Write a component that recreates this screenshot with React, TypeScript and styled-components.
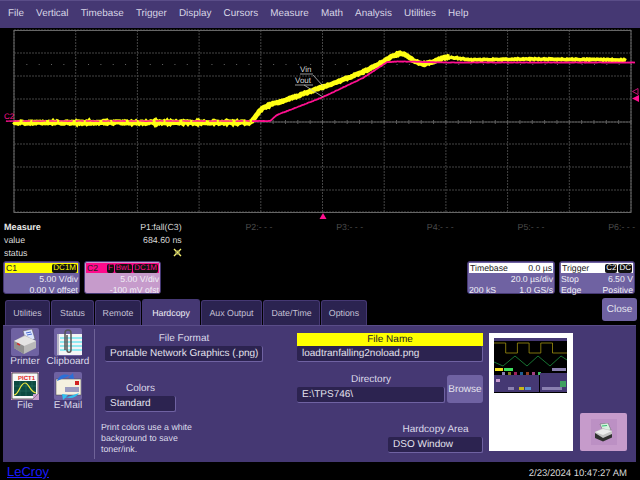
import React from 'react';
import styled, { createGlobalStyle } from 'styled-components';

const GlobalStyle = createGlobalStyle`
  html, body {
    margin: 0;
    background: #000;
  }
  * {
    box-sizing: border-box;
  }
`;

const MENU = ['File', 'Vertical', 'Timebase', 'Trigger', 'Display', 'Cursors', 'Measure', 'Math', 'Analysis', 'Utilities', 'Help'];
const TABS = ['Utilities', 'Status', 'Remote', 'Hardcopy', 'Aux Output', 'Date/Time', 'Options'];
const TAB_WIDTHS = [45, 43, 46, 58, 61, 57, 46];

const VLINES = [14, 75.7, 137.4, 199.1, 260.8, 322.5, 384.2, 445.9, 507.6, 569.3, 631];
const HLINES = [30, 53, 76, 99, 122, 144, 167, 190, 212];

const YELLOW_FLAT: number[][] = [[14, 122.5], [250, 122.5]];
const YELLOW_RISE: number[][] = [
  [250, 122.5], [253, 120], [258, 113], [263, 108], [272, 104], [280, 102], [300, 95], [323, 87],
  [345, 79], [363, 72], [383, 62], [392, 56], [400, 53.5], [406, 55], [413, 60], [420, 63.5], [425, 64], [435, 61],
  [443, 58], [450, 57],
];
const YELLOW_TAIL: number[][] = [[450, 57], [460, 58.5], [470, 60], [520, 59], [580, 59.5], [626, 60]];
const PINK_FLAT: number[][] = [[6, 121], [252, 121]];
const PINK_RISE: number[][] = [
  [252, 121], [270, 121], [277, 115], [300, 106], [323, 97], [363, 78], [387, 62], [400, 61.5], [450, 62.5], [635, 62.5],
];

// small seeded generator so the noise stays the same on every render
const makeNoise = (seed: number) => {
  let s = seed;
  return () => {
    s = (s * 16807) % 2147483647;
    return s / 2147483647 - 0.5;
  };
};

const tracePath = (pts: number[][], amp: number, seed: number) => {
  const noise = makeNoise(seed);
  const out: string[] = [];
  const end = pts[pts.length - 1][0];
  let seg = 0;
  for (let x = pts[0][0]; x <= end; x += 1) {
    while (seg < pts.length - 2 && x > pts[seg + 1][0]) seg++;
    const [x0, y0] = pts[seg];
    const [x1, y1] = pts[seg + 1];
    const y = y0 + ((y1 - y0) * (x - x0)) / (x1 - x0);
    out.push(`${x},${(y + noise() * amp).toFixed(2)}`);
  }
  return out.join(' ');
};

const Scope = () => (
  <ScopeSvg viewBox="0 28 640 192" width={640} height={192}>
    {VLINES.map((x) => (
      <line key={x} x1={x} x2={x} y1={30} y2={212} stroke="#444" strokeWidth={1} strokeDasharray="2 1" />
    ))}
    {HLINES.map((y) => (
      <line key={y} x1={14} x2={631} y1={y} y2={y} stroke="#444" strokeWidth={1} strokeDasharray="2 1" />
    ))}
    <rect x={14} y={30.5} width={617} height={182} fill="none" stroke="#666" />
    <line x1={14} x2={631} y1={122} y2={122} stroke="#5c5c5c" />
    {Array.from({ length: 51 }).map((_, i) => (
      <line key={i} x1={14 + i * 12.34} x2={14 + i * 12.34} y1={120} y2={124} stroke="#5c5c5c" />
    ))}
    {Array.from({ length: 51 }).map((_, i) => (
      <rect key={i} x={14 + i * 12.34} y={64} width={1} height={1} fill="#666" />
    ))}
    <polyline points={tracePath(YELLOW_FLAT, 1.8, 4711)} fill="none" stroke="#ffff14" strokeWidth={5} />
    <polyline points={tracePath(PINK_FLAT, 0.4, 91)} fill="none" stroke="#ff1090" strokeWidth={1.4} strokeDasharray="14 3 8 2" />
    <polyline points={tracePath(YELLOW_RISE, 1.2, 733)} fill="none" stroke="#ffff14" strokeWidth={5} />
    <polyline points={tracePath(YELLOW_TAIL, 1.2, 2027)} fill="none" stroke="#ffff14" strokeWidth={3.6} />
    <polyline points={tracePath(PINK_RISE, 0.4, 311)} fill="none" stroke="#ff1090" strokeWidth={1.8} />
    <ScopeLabel x={4} y={119} fill="#ff1090">C2</ScopeLabel>
    <ScopeLabel x={300} y={72} fill="#d8d8d8" fontSize={10}>Vin</ScopeLabel>
    <ScopeLabel x={295} y={83} fill="#d8d8d8" fontSize={10}>Vout</ScopeLabel>
    <path d="M300 74H313M295 85H313M313 75L323 86M304 85L323 97" fill="none" stroke="#bdbdbd" strokeWidth={0.8} />
    <path d="M638 88.5V94.5L632.5 91.5Z" fill="none" stroke="#c01070" />
    <path d="M639 95V102L632 98.5Z" fill="#ff1090" />
    <path d="M323 213L326.5 219H319.5Z" fill="#ff1090" />
  </ScopeSvg>
);

const StatusMark = () => (
  <svg width={9} height={9} viewBox="0 0 9 9">
    <path d="M1 1L8 8M8 1L1 8" stroke="#f4f070" strokeWidth={1.4} />
    <circle cx={4.5} cy={4.5} r={2} fill="none" stroke="#8a8a50" />
  </svg>
);

const PrinterIcon = () => (
  <svg width={28} height={28} viewBox="0 0 28 28">
    <path d="M12 3L21 1L24 11L15 13Z" fill="#dfe6ff" stroke="#555" strokeWidth={0.5} />
    <path d="M15 5L20 4M16 7L21 6" stroke="#4a6fd0" strokeWidth={1} />
    <path d="M3 13L14 7L25 13V20L13 26L3 20Z" fill="#b9b9b9" />
    <path d="M3 13L13 18L25 13L14 8Z" fill="#e4e4e4" />
    <path d="M13 18V26L3 20V13Z" fill="#8f8f8f" />
    <path d="M6 15.5L9 17" stroke="#d03030" strokeWidth={1.5} />
  </svg>
);

const ClipboardIcon = () => (
  <svg width={28} height={28} viewBox="0 0 28 28">
    <rect x={3} y={6} width={25} height={21} fill="#f4f4f4" />
    <path d="M6 10H28M6 14H28M6 18H28M6 22H28" stroke="#30e0f0" strokeWidth={1} />
    <rect x={3} y={6} width={2} height={21} fill="#b8b8c8" />
    <path d="M11 22V5C11 1 17 1 17 5V22C17 25 13 25 13 22V7" fill="none" stroke="#555" strokeWidth={1.5} />
  </svg>
);

const FileIcon = () => (
  <svg width={28} height={28} viewBox="0 0 28 28">
    <rect width={28} height={28} fill="#c69bcb" />
    <path d="M1 1H27V22L22 27H1Z" fill="#f8f8f8" stroke="#222" strokeWidth={0.7} />
    <IconText x={7} y={7.5} fill="#e02020">PICT1</IconText>
    <rect x={3} y={9} width={22} height={15} fill="#0c4a40" />
    <path d="M9 9V24M15 9V24M21 9V24M3 14H25M3 19H25" stroke="#2c7a6a" strokeWidth={0.5} />
    <path d="M3 23C8 23 9 11 14 11C18 11 19 20 25 21" fill="none" stroke="#f0e840" strokeWidth={1.2} />
    <path d="M22 27V22H27Z" fill="#c9a0d0" />
  </svg>
);

const MailIcon = () => (
  <svg width={28} height={28} viewBox="0 0 28 28">
    <rect x={2} y={7} width={25} height={16} fill="#f4f0e0" stroke="#444" strokeWidth={0.5} />
    <rect x={21} y={9} width={4} height={4} fill="#d02020" />
    <rect x={11} y={15} width={14} height={5} fill="#9a9ac0" />
    <path d="M3 9C5 3 11 1 16 4L14 6L20 7L19 1L17 3" fill="#2a70d8" />
    <path d="M25 21C22 26 16 27 12 25L14 23L8 22L9 28L11 26" fill="#30c0f0" />
  </svg>
);

const PrintGlyph = () => (
  <svg width={19} height={19} viewBox="0 0 19 19">
    <path d="M6 1L14 0L17 7L9 8Z" fill="#d8f0e0" stroke="#444" strokeWidth={0.4} />
    <path d="M8 3L13 2.5" stroke="#30c070" strokeWidth={1.2} />
    <path d="M1 9L9 5L18 8V14L9 18L1 14Z" fill="#c4c4c4" />
    <path d="M1 9L9 12L18 8L9 6Z" fill="#ececec" />
    <path d="M1 10V15L9 18.5L18 14.5V11L9 15Z" fill="#303030" />
  </svg>
);

const Thumbnail = () => (
  <svg width={73} height={55} viewBox="0 0 73 55">
    <rect width={73} height={55} fill="#000" />
    <rect width={73} height={3} fill="#453873" />
    <path d="M0 5H11.7V15H23.4V5H35.1V15H46.8V5H58.5V15H73" fill="none" stroke="#a09010" strokeWidth={0.8} />
    <path d="M0 24L9 28L21 18L33 28L44 18L56 28L67 18L73 22" fill="none" stroke="#1a8038" strokeWidth={0.9} />
    <rect x={1} y={30} width={8} height={3} fill="#f0e020" />
    <rect x={10} y={30} width={9} height={3} fill="#40e060" />
    <rect x={58} y={30} width={14} height={3} fill="#8a80b0" />
    {['#8a80b0', '#807820', '#a02060', '#206090', '#904020', '#a04080', '#40c060'].map((c, i) => (
      <rect key={c} x={8 + i * 6} y={34} width={3} height={3} fill={c} />
    ))}
    <rect x={0} y={37} width={45} height={17} fill="#453873" />
    <rect x={46} y={35} width={27} height={19} fill="#453873" />
    <rect x={66} y={43} width={6} height={6} fill="#40a060" />
    <rect x={2} y={41} width={4} height={3} fill="#c89ad0" />
    <rect x={14} y={49} width={6} height={3} fill="#8a80b0" />
    <rect x={25} y={49} width={5} height={3} fill="#c8b818" />
    <rect x={31} y={49} width={6} height={3} fill="#5a90d0" />
    <rect x={48} y={49} width={20} height={3} fill="#8a80b0" />
  </svg>
);

const App = () => {
  return (
    <Page>
      <GlobalStyle />
      <MenuBar>
        {MENU.map((m) => (
          <MenuItem key={m}>{m}</MenuItem>
        ))}
      </MenuBar>
      <Scope />
      <MeasureTable>
        <MeasureHead>Measure</MeasureHead>
        <MeasureCell>P1:fall(C3)</MeasureCell>
        {['P2', 'P3', 'P4', 'P5', 'P6'].map((p) => (
          <MeasureCell key={p} $dim>{p}:- - -</MeasureCell>
        ))}
        <MeasureLabel>value</MeasureLabel>
        <MeasureCell>684.60 ns</MeasureCell>
        <MeasureRest />
        <MeasureLabel>status</MeasureLabel>
        <MeasureCell><StatusMark /></MeasureCell>
        <MeasureRest />
      </MeasureTable>
      <DescriptorRow>
        <Descriptor $w={77} $bg="#6f62a2">
          <DescriptorTitle $bg="#ffff00">
            C1
            <Chips><Chip $fg="#ffff00">DC1M</Chip></Chips>
          </DescriptorTitle>
          <DescriptorLine><span />5.00 V/div</DescriptorLine>
          <DescriptorLine><span />0.00 V offset</DescriptorLine>
        </Descriptor>
        <Descriptor $w={77} $bg="#c69bcb">
          <DescriptorTitle $bg="#ff0a8c">
            C2
            <Chips>
              <Chip $fg="#ff0a8c">F</Chip>
              <Chip $fg="#ff0a8c">BwL</Chip>
              <Chip $fg="#ff0a8c">DC1M</Chip>
            </Chips>
          </DescriptorTitle>
          <DescriptorLine><span />5.00 V/div</DescriptorLine>
          <DescriptorLine><span />-100 mV ofst</DescriptorLine>
        </Descriptor>
        <DescriptorSpacer />
        <Descriptor $w={88} $bg="#6f62a2">
          <DescriptorTitle $bg="#ffffff">
            Timebase
            <span>0.0 µs</span>
          </DescriptorTitle>
          <DescriptorLine><span />20.0 µs/div</DescriptorLine>
          <DescriptorLine><span>200 kS</span>1.0 GS/s</DescriptorLine>
        </Descriptor>
        <Descriptor $w={76} $bg="#6f62a2">
          <DescriptorTitle $bg="#ffffff">
            Trigger
            <Chips>
              <Chip $fg="#ffffff">C2</Chip>
              <Chip $fg="#ffffff">DC</Chip>
            </Chips>
          </DescriptorTitle>
          <DescriptorLine><span>Stop</span>6.50 V</DescriptorLine>
          <DescriptorLine><span>Edge</span>Positive</DescriptorLine>
        </Descriptor>
      </DescriptorRow>
      <TabRow>
        {TABS.map((t, i) => (
          <Tab key={t} $w={TAB_WIDTHS[i]} $active={t === 'Hardcopy'}>{t}</Tab>
        ))}
        <CloseButton>Close</CloseButton>
      </TabRow>
      <Panel>
        <IconGrid>
          <IconCell>
            <IconTile><PrinterIcon /></IconTile>
            Printer
          </IconCell>
          <IconCell>
            <IconTile><ClipboardIcon /></IconTile>
            Clipboard
          </IconCell>
          <IconCell>
            <IconTile><FileIcon /></IconTile>
            File
          </IconCell>
          <IconCell>
            <IconTile><MailIcon /></IconTile>
            E-Mail
          </IconCell>
        </IconGrid>
        <Divider />
        <FormatColumn>
          <FieldLabel $w={158} $top={4}>File Format</FieldLabel>
          <Field $w={158}>Portable Network Graphics (.png)</Field>
          <FieldLabel $w={71} $top={21}>Colors</FieldLabel>
          <Field $w={71}>Standard</Field>
          <Note>
            Print colors use a white<br />
            background to save<br />
            toner/ink.
          </Note>
        </FormatColumn>
        <FileColumn>
          <FileNameTitle>File Name</FileNameTitle>
          <Field $w={186}>loadtranfalling2noload.png</Field>
          <DirectoryRow>
            <div>
              <FieldLabel $w={148} $top={12}>Directory</FieldLabel>
              <Field $w={148}>E:\TPS746\</Field>
            </div>
            <BrowseButton>Browse</BrowseButton>
          </DirectoryRow>
          <AreaBlock>
            <FieldLabel $w={95} $top={0}>Hardcopy Area</FieldLabel>
            <Field $w={95}>DSO Window</Field>
          </AreaBlock>
        </FileColumn>
        <PreviewSheet>
          <Thumbnail />
        </PreviewSheet>
        <PrintButton>
          <PrintTile><PrintGlyph /></PrintTile>
        </PrintButton>
      </Panel>
      <Footer>
        <Brand href="#">LeCroy</Brand>
        <Stamp>2/23/2024 10:47:27 AM</Stamp>
      </Footer>
    </Page>
  );
};

export default App;

const Page = styled.div`
  width: 640px;
  height: 480px;
  overflow: hidden;
  background: #000;
  color: #e4e2ee;
  font-family: 'Liberation Sans', Arial, sans-serif;
  font-size: 10px;
  text-rendering: geometricPrecision;
`;

const MenuBar = styled.div`
  height: 28px;
  padding: 0 0 2px 8px;
  display: flex;
  align-items: center;
  gap: 12.2px;
  background: #453873;
  border-top: 1px solid #5a4d88;
`;

const MenuItem = styled.div`
  font-size: 9.9px;
  color: #d8d6e6;
`;

const ScopeSvg = styled.svg`
  display: block;
`;

const ScopeLabel = styled.text`
  font-family: 'Liberation Sans', Arial, sans-serif;
  font-size: 8px;
`;

const IconText = styled.text`
  font-family: 'Liberation Sans', Arial, sans-serif;
  font-size: 6px;
  font-weight: 700;
`;

const MeasureTable = styled.div`
  height: 41px;
  padding-left: 4px;
  display: grid;
  grid-template-columns: 87px repeat(6, 90.7px);
  grid-auto-rows: 13px;
  align-items: center;
  font-size: 8.8px;
`;

const MeasureHead = styled.div`
  font-weight: 700;
  font-size: 9.1px;
  color: #e8e8e8;
`;

const MeasureLabel = styled.div`
  color: #dcdcdc;
`;

const MeasureCell = styled.div<{ $dim?: boolean }>`
  display: flex;
  justify-content: flex-end;
  white-space: nowrap;
  color: ${(p) => (p.$dim ? '#4a4a4a' : '#d8d8d8')};
`;

const MeasureRest = styled.div`
  grid-column: 3 / 8;
`;

const DescriptorRow = styled.div`
  height: 33px;
  padding: 0 5px 0 3px;
  display: flex;
  gap: 4px;
`;

const DescriptorSpacer = styled.div`
  flex: 1;
`;

const Descriptor = styled.div<{ $w: number; $bg: string }>`
  width: ${(p) => p.$w}px;
  padding: 1px 1px 0;
  background: ${(p) => p.$bg};
  border: 1px solid #453873;
  border-radius: 3px;
  color: #f0eef6;
  font-size: 8.7px;
  line-height: 10.5px;
`;

const DescriptorTitle = styled.div<{ $bg: string }>`
  height: 10px;
  padding: 0 1px;
  margin-bottom: 1px;
  display: flex;
  align-items: center;
  justify-content: space-between;
  background: ${(p) => p.$bg};
  color: #222;
  white-space: nowrap;
`;

const Chips = styled.div`
  display: flex;
  gap: 1px;
`;

const Chip = styled.span<{ $fg: string }>`
  height: 9px;
  padding: 0 1px;
  display: flex;
  align-items: center;
  background: #111;
  border-radius: 2px;
  color: ${(p) => p.$fg};
  font-size: 8px;
`;

const DescriptorLine = styled.div`
  display: flex;
  justify-content: space-between;
  white-space: nowrap;
`;

const TabRow = styled.div`
  height: 31px;
  padding: 5px 3px 0 5px;
  display: flex;
  align-items: flex-end;
  gap: 1px;
`;

const Tab = styled.div<{ $w: number; $active: boolean }>`
  width: ${(p) => p.$w}px;
  height: ${(p) => (p.$active ? 26 : 25)}px;
  display: flex;
  align-items: center;
  justify-content: center;
  background: ${(p) => (p.$active ? '#453873' : '#2b2350')};
  border: 1px solid #453873;
  border-bottom: none;
  border-radius: 3px 3px 0 0;
  color: ${(p) => (p.$active ? '#f0eef6' : '#c4c0d4')};
  font-size: 8.8px;
  white-space: nowrap;
`;

const CloseButton = styled.div`
  width: 35px;
  height: 23px;
  margin: 0 0 4px auto;
  align-self: flex-end;
  display: flex;
  align-items: center;
  justify-content: center;
  background: #6f62a2;
  border-radius: 3px;
  color: #e4e2ee;
  font-size: 10px;
`;

const Panel = styled.div`
  width: 633px;
  height: 137px;
  margin-left: 3px;
  padding: 3px 9px 3px 8px;
  display: flex;
  background: #453873;
  border-top: 1px solid #5a4d88;
`;

const IconGrid = styled.div`
  width: 83px;
  height: 88px;
  margin-top: -1px;
  display: grid;
  grid-template-columns: 43px 40px;
  grid-auto-rows: 44px;
`;

const IconCell = styled.div`
  display: flex;
  flex-direction: column;
  align-items: center;
  width: 40px;
  margin-left: -6px;
  color: #dcdaea;
  font-size: 10px;
  line-height: 11px;
  white-space: nowrap;
`;

const IconTile = styled.div`
  width: 28px;
  height: 28px;
  background: #6f62a2;
  border-radius: 2px;
`;

const Divider = styled.div`
  width: 1px;
  margin-right: 6px;
  background: #6f6398;
`;

const FormatColumn = styled.div`
  width: 196px;
  padding-left: 4px;
  display: flex;
  flex-direction: column;
  align-items: flex-start;
`;

const FieldLabel = styled.div<{ $w: number; $top: number }>`
  width: ${(p) => p.$w}px;
  height: 11px;
  margin-top: ${(p) => p.$top}px;
  margin-bottom: 2px;
  line-height: 11px;
  text-align: center;
  color: #dcdaea;
  font-size: 10px;
`;

const Field = styled.div<{ $w: number }>`
  width: ${(p) => p.$w}px;
  height: 16px;
  padding-left: 5px;
  display: flex;
  align-items: center;
  background: #2c2350;
  border-right: 1px solid #6f62a2;
  border-bottom: 1px solid #6f62a2;
  border-radius: 2px;
  color: #e4e2ee;
  font-size: 10px;
  white-space: nowrap;
`;

const Note = styled.div`
  margin: 10px 0 0 -4px;
  line-height: 11px;
  font-size: 8.8px;
  color: #dcdaea;
`;

const FileColumn = styled.div`
  width: 186px;
  padding-top: 4px;
  display: flex;
  flex-direction: column;
`;

const FileNameTitle = styled.div`
  height: 13px;
  line-height: 13px;
  text-align: center;
  background: #ffff00;
  color: #222;
  font-size: 10px;
`;

const DirectoryRow = styled.div`
  display: flex;
  align-items: flex-end;
  justify-content: space-between;
`;

const BrowseButton = styled.div`
  width: 36px;
  height: 28px;
  display: flex;
  align-items: center;
  justify-content: center;
  background: #6f62a2;
  border-radius: 3px;
  color: #e4e2ee;
  font-size: 10px;
`;

const AreaBlock = styled.div`
  margin: 21px 0 0 auto;
`;

const PreviewSheet = styled.div`
  width: 84px;
  height: 118px;
  margin: 4px 0 0 6px;
  padding: 5px;
  background: #fff;
`;

const PrintButton = styled.div`
  width: 47px;
  height: 38px;
  margin: 84px 0 0 7px;
  display: flex;
  align-items: center;
  justify-content: center;
  background: #c69bcb;
  border-radius: 2px;
`;

const PrintTile = styled.div`
  width: 26px;
  height: 26px;
  display: flex;
  align-items: center;
  justify-content: center;
  background: #bc90c4;
`;

const Footer = styled.div`
  height: 19px;
  padding: 0 13px 1px 7px;
  display: flex;
  justify-content: space-between;
  align-items: flex-end;
`;

const Brand = styled.a`
  color: #1a1aff;
  font-size: 13px;
  line-height: 16px;
`;

const Stamp = styled.div`
  color: #d8d8d8;
  font-size: 9.5px;
  line-height: 13px;
`;
